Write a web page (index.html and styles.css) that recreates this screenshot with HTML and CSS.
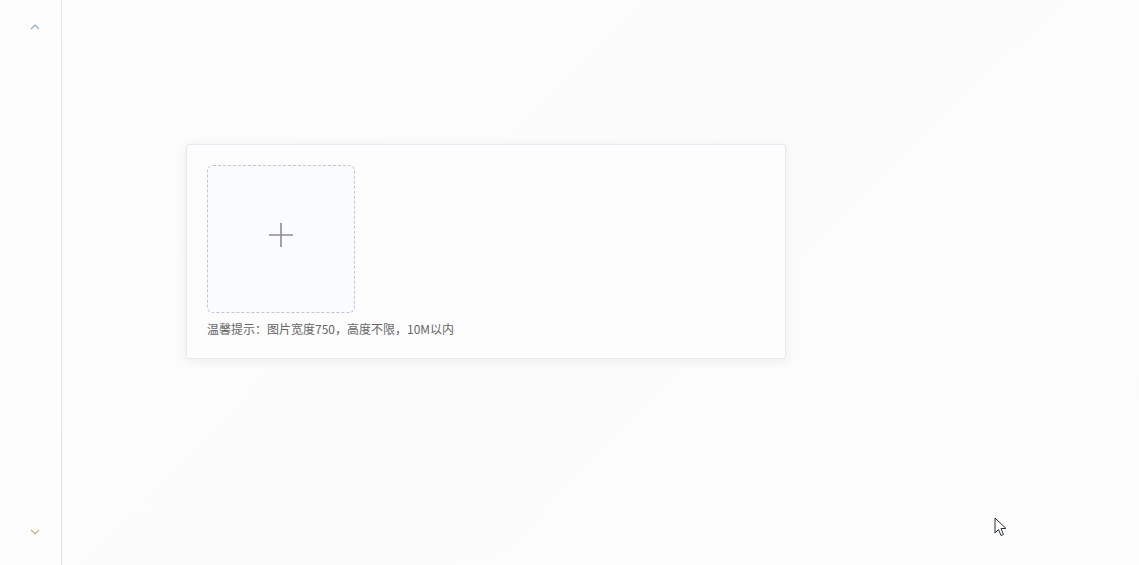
FILE: index.html
```html
<!DOCTYPE html>
<html lang="zh-CN">
<head>
    <meta charset="UTF-8">
    <title>图片上传</title>
    <link rel="stylesheet" href="styles.css">
</head>
<body>
<div class="page">
    <aside class="side">
        <button class="arrow" aria-label="上一个">
            <svg width="12" height="8" viewBox="0 0 12 8"><path d="M2 6 L6 2 L10 6" fill="none" stroke="#8fa9c4" stroke-width="1.1"/></svg>
        </button>
        <button class="arrow" aria-label="下一个">
            <svg width="12" height="8" viewBox="0 0 12 8"><path d="M2 2 L6 6 L10 2" fill="none" stroke="#c9a878" stroke-width="1.1"/></svg>
        </button>
    </aside>
    <main class="main">
        <div class="card">
            <div class="upload">
                <svg width="26" height="26" viewBox="0 0 26 26"><path d="M13 1 V25 M1 13 H25" stroke="#8b8a9c" stroke-width="1.6"/></svg>
            </div>
            <p class="tip">温馨提示：图片宽度750，高度不限，10M以内</p>
        </div>
    </main>
</div>
<svg class="cursor" width="14" height="22" viewBox="0 0 14 22">
    <path d="M1 1 V16 L4.5 12.5 L7 18.5 L9.5 17.5 L7 11.5 L12 11.5 Z" fill="#fff" stroke="#2a2e3a" stroke-width="1" stroke-linejoin="round"/>
</svg>
</body>
</html>
```

FILE: styles.css
```css
body {
    margin: 0;
    font-family: "Noto Sans CJK SC", "Liberation Sans", sans-serif;
    background: linear-gradient(135deg, #fcfcfd 0%, #fbfbfc 50%, #fcfcfc 100%);
    height: 565px;
    overflow: hidden;
}
.page {
    display: flex;
    height: 565px;
}
.side {
    width: 62px;
    border-right: 1px solid #e6e6ea;
    display: flex;
    flex-direction: column;
    justify-content: space-between;
    align-items: center;
    padding: 23px 0 29px;
    box-sizing: border-box;
    background: #fdfdfd;
}
.arrow {
    border: none;
    background: none;
    padding: 0;
    margin-left: 8px;
    width: 12px;
    height: 8px;
    display: flex;
    cursor: pointer;
}
.main {
    flex: 1;
    padding: 144px 0 0 124px;
}
.card {
    width: 558px;
    height: 173px;
    padding: 20px;
    background: #fdfdfd;
    border: 1px solid #e8e8f2;
    border-radius: 3px;
    box-shadow: 0 2px 8px rgba(60, 60, 100, 0.08);
}
.upload {
    width: 146px;
    height: 137px;
    padding-bottom: 9px;
    border: 1px dashed #c0c8d6;
    border-radius: 6px;
    background: #f9fbfe;
    display: flex;
    align-items: center;
    justify-content: center;
}
.tip {
    margin: 7px 0 0;
    font-size: 12px;
    line-height: 17px;
    color: #666;
}
.cursor {
    position: absolute;
    left: 994px;
    top: 517px;
}
```
